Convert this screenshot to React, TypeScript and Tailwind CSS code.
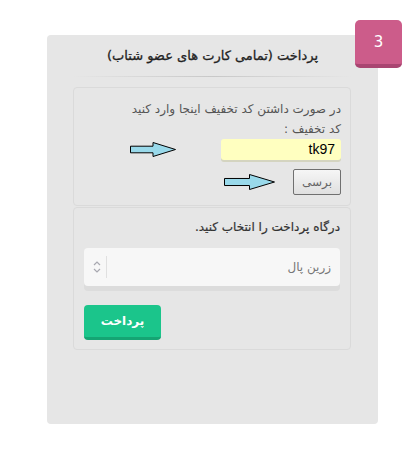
import React from "react";

const Arrow = ({ w, h }: { w: number; h: number }) => (
  <svg width={w} height={h} viewBox={`0 0 ${w} ${h}`} className="block">
    <polygon
      points={`0.5,${h * 0.28} ${w * 0.5},${h * 0.28} ${w * 0.5},0.5 ${w - 0.5},${h / 2} ${w * 0.5},${h - 0.5} ${w * 0.5},${h * 0.72} 0.5,${h * 0.72}`}
      fill="#99d9ea"
      stroke="#000"
      strokeWidth="1"
    />
  </svg>
);

export default function App() {
  return (
    <div
      className="min-h-[459px] bg-white pt-[35px] pl-[47px]"
      style={{ fontFamily: '"DejaVu Sans", Tahoma, sans-serif' }}
    >
      <div className="relative w-[331px] h-[389px] bg-[#e6e6e6] rounded-[4px]">
        <div className="absolute left-[308px] top-[-15px] w-[47px] h-[48px] rounded-[5px] bg-[#cc5c8a] border-b-[4px] border-[#a94571] flex items-center justify-center text-white text-[15px]">
          3
        </div>

        <div dir="rtl" className="pt-[12px]">
          <div className="text-center text-[13px] text-[#222] leading-[18px] [-webkit-text-stroke:0.3px_#222]">
            پرداخت (تمامی کارت های عضو شتاب)
          </div>
          <div className="mt-[11px] mx-[26px] h-px bg-gradient-to-r from-[#e6e6e6] via-[#c8c8c8] to-[#e6e6e6]" />

          <div className="mt-[10px] mr-[27px] ml-[26px] border border-[#dadada] rounded-[4px] pt-[12px] pb-[10px] pr-[9px]">
            <div className="text-[12px] text-[#555] leading-[18px]">
              در صورت داشتن کد تخفیف اینجا وارد کنید
            </div>
            <div className="mt-[2px] text-[12px] text-[#555] leading-[18px]">کد تخفیف :</div>
            <div className="flex items-center mt-[1px]">
              <div className="w-[120px] h-[21px] bg-[#ffffc0] rounded-[3px] shadow-[0_2px_0_#d4d4c0] text-[14px] text-black flex items-center pr-[6px]" style={{ fontFamily: '"Liberation Sans", sans-serif' }}>
                tk97
              </div>
              <div className="mr-[45px]">
                <Arrow w={46} h={15} />
              </div>
            </div>
            <div className="flex items-center mt-[9px]">
              <div className="w-[48px] h-[26px] bg-gradient-to-b from-[#f6f6f6] to-[#e0e0e0] border border-[#707070] rounded-[2px] text-[12px] text-[#666] flex items-center justify-center">
                برسی
              </div>
              <div className="mr-[18px]">
                <Arrow w={51} h={16} />
              </div>
            </div>
          </div>

          <div className="mt-px mr-[27px] ml-[26px] border border-[#dadada] rounded-[4px] pt-[10px] pb-[9px] px-[10px]">
            <div className="text-[12px] text-[#333] leading-[18px] [-webkit-text-stroke:0.2px_#333]">
              درگاه پرداخت را انتخاب کنید.
            </div>
            <div className="mt-[12px] h-[38px] bg-[#f7f7f7] rounded-[4px] shadow-[0_5px_0_#dcdcdc] flex items-center pr-[9px] pl-[9px]">
              <span className="flex-1 text-[12px] text-[#777]">زرین پال</span>
              <span className="w-px h-[22px] bg-[#e0e0e0] ml-[5px]" />
              <svg width="8" height="14" viewBox="0 0 8 14" className="block">
                <path d="M1 5 L4 2 L7 5" fill="none" stroke="#a8a8b0" strokeWidth="1.2" />
                <path d="M1 9 L4 12 L7 9" fill="none" stroke="#a8a8b0" strokeWidth="1.2" />
              </svg>
            </div>
            <div className="flex justify-end mt-[19px]">
              <div className="w-[77px] h-[35px] bg-[#1bc58b] border-b-[3px] border-[#15a573] rounded-[4px] text-white text-[12px] font-bold flex items-center justify-center">
                پرداخت
              </div>
            </div>
          </div>
        </div>
      </div>
    </div>
  );
}
